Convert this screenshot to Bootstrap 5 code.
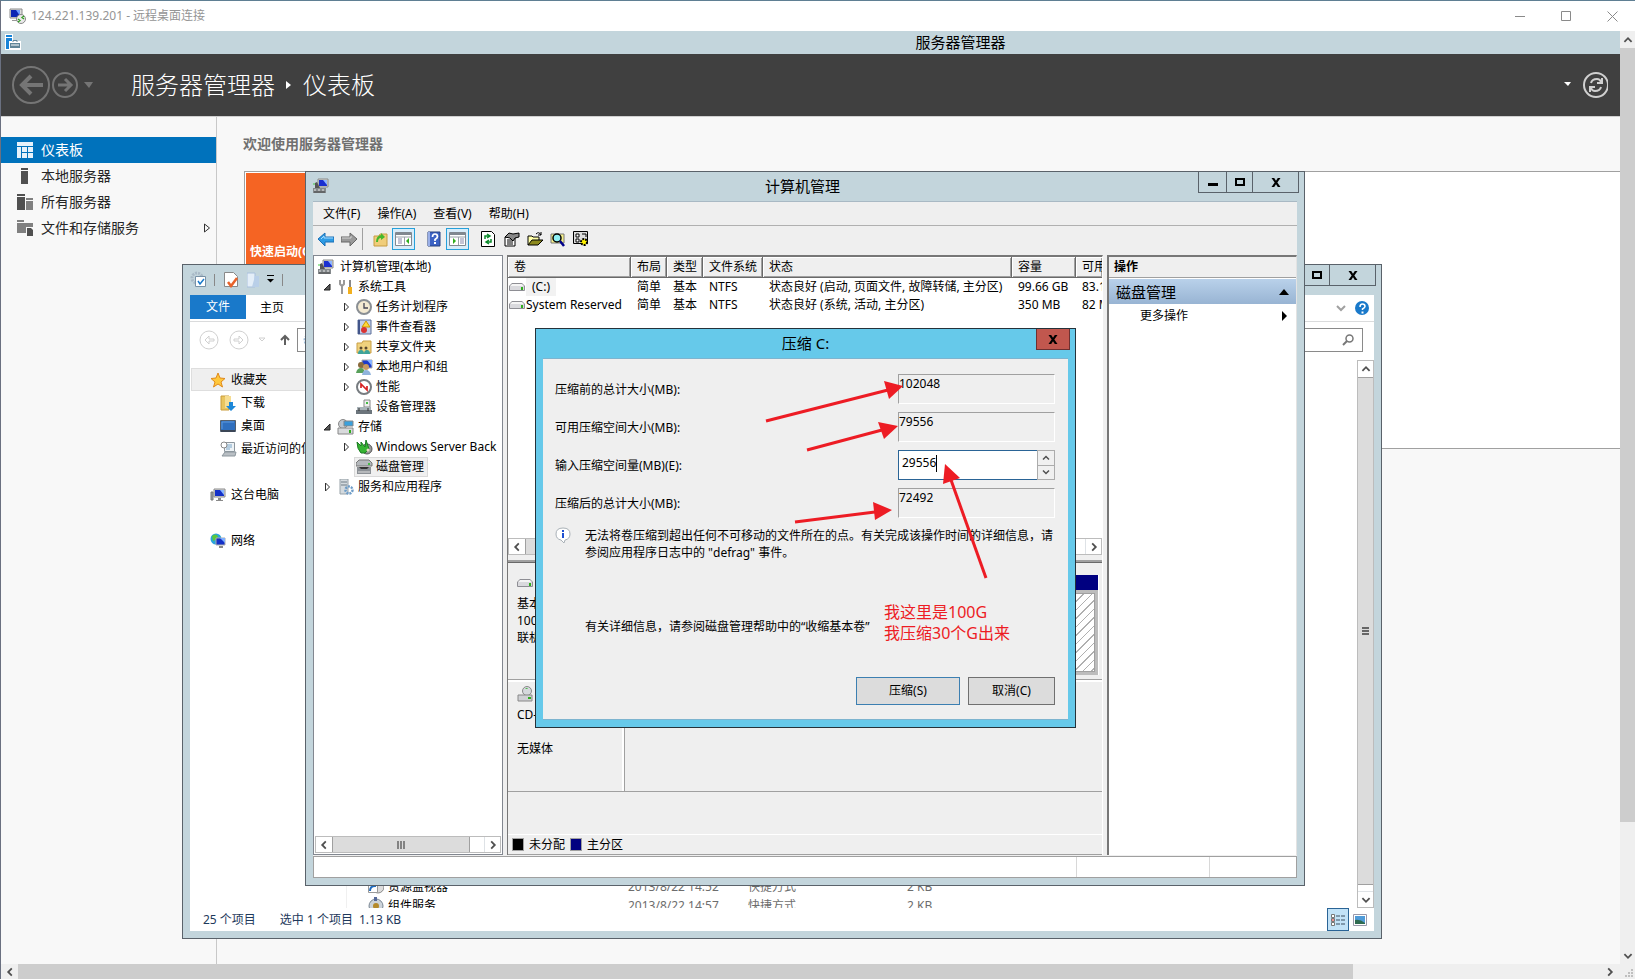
<!DOCTYPE html>
<html lang="zh-CN">
<head>
<meta charset="utf-8">
<meta name="viewport" content="width=device-width, initial-scale=1">
<title>124.221.139.201 - 远程桌面连接</title>
<link href="https://cdn.jsdelivr.net/npm/bootstrap@5.3.0/dist/css/bootstrap.min.css" rel="stylesheet">
<script src="https://cdn.jsdelivr.net/npm/bootstrap@5.3.0/dist/js/bootstrap.bundle.min.js"></script>
<style>
  :root { --frame:#c3d5dc; --face:#efefef; --edge:#5a626a; }
  body { font-family:"Noto Sans","Noto Sans CJK SC",sans-serif; font-size:12px; line-height:18px; color:#000; background:#fff; overflow:hidden; }
  .desk { height:100vh; border-top:1px solid #5f7f93; border-left:1px solid #6a7080; }
  button { font:inherit; color:inherit; background:none; border:0; padding:0; }
  a { color:inherit; text-decoration:none; }
  svg { flex:none; display:block; }
  .clip { overflow:hidden; white-space:nowrap; }

  .rdp-bar { height:30px; color:#959595; padding-left:8px; }
  .rdp-bar button { width:46px; height:30px; }
  .sm-title { height:23px; background:var(--frame); font-size:15px; padding-bottom:2px; }
  .sm-title .caption-text { margin-left:280px; }
  .sm-head { height:62px; background:#404040; color:#fff; font-size:24px; font-weight:300; }
  .sm-head .history { margin-right:38px; }
  .sm-side { width:216px; background:#f8f8f8; border-right:1px solid #c8c8c8; padding-top:20px; }
  .sm-side a { height:26px; font-size:14px; padding:0 5px 0 15px; color:#262626; gap:7px; }
  .sm-side a.current { background:#0072bc; color:#fff; }
  .sm-main { background:#f8f8f8; border-top:1px solid #d0d0d0; }
  .sm-main h1 { font-size:14px; line-height:20px; font-weight:700; color:#707070; margin:0; padding:17px 0 0 26px; }
  .welcome { margin:17px 0 0 27px; height:278px; border:1px solid #a0a0a0; border-right:0; background:#fff; padding:1px; }
  .tile { width:240px; height:91px; background:#f56423; color:#fff; padding:0 4px 3px; font-size:12px; font-weight:700; }

  .vbar { width:15px; background:var(--face); }
  .vbar .thumb { background:#cdcdcd; }
  .hbar { height:15px; background:var(--face); }
  .hbar .thumb { background:#cdcdcd; }
  .end { width:17px; height:17px; }
  .vbar .end { width:15px; }
  .hbar .end { height:15px; }

  .win { position:absolute; border:1px solid var(--edge); background:var(--frame); padding:0 7px 7px; }
  .win-btns button { border:1px solid var(--edge); border-top:0; height:21px; margin-left:-1px; }
  .win-btns { margin-right:-2px; }

  .explorer { left:182px; top:264px; width:1200px; height:675px; }
  .explorer .bar { height:30px; padding-bottom:1px; }
  .qat { gap:7px; }
  .explorer .client { background:#fff; }
  .ribbon { height:27px; border-bottom:1px solid #dadbdc; }
  .ribbon .file { width:56px; height:24px; background:#1979ca; color:#fff; }
  .ribbon .home { width:52px; height:26px; }
  .nav-row { height:38px; padding-bottom:2px; }
  .addr { height:24px; border:1px solid #8a8a8a; }
  .search-box { width:240px; margin:0 11px 0 8px; }
  .places { width:157px; border-right:1px solid #f0f0f0; padding-top:8px; }
  .places a { height:23px; padding-left:30px; gap:4px; }
  .places a.top-level { padding-left:20px; gap:5px; }
  .places a.picked { background:var(--face); border:1px solid #dedede; margin-left:1px; padding-left:18px; }
  .files { width:620px; margin-bottom:-7px; }
  .files td { height:19px; padding:0; color:#6d6d6d; }
  .files td:first-child { color:#000; }
  .ex-scroll { width:17px; border:1px solid #bcbcbc; }
  .ex-scroll .thumb { background:#dcdcdc; border-top:1px solid #a0a0a0; border-bottom:1px solid #a0a0a0; height:508px; }
  .ex-scroll .step { height:16px; }
  .ex-status { height:23px; color:#1e395b; padding:0 7px 0 13px; gap:20px; }
  .view-on { width:22px; height:23px; background:#c2e2f7; border:1px solid #2a6496; }

  .mmc { left:305px; top:171px; width:1000px; height:715px; }
  .mmc .bar { height:30px; border-bottom:1px solid #a9b9c4; font-size:15px; }
  .mmc .caption-text { padding:0 0 1px 76px; }
  .mmc .client { background:var(--face); }
  .menu { height:24px; border-bottom:1px solid #b0b0b0; padding-left:10px; gap:17px; }
  .tools { height:29px; padding:0 0 4px 5px; }
  .tools button { height:22px; width:23px; }
  .tools .on { border:1px solid #26a0da; background:#d8ecf9; }
  .tools .rule { width:1px; height:22px; background:#a0a0a0; margin:0 6px 0 -2px; }
  .panes { gap:4px; }
  .tree { width:190px; background:#fff; border:1px solid #828790; padding:1px 1px 1px; }
  .tree ul { list-style:none; margin:0; padding:0; }
  .tree li { height:20px; gap:3px; }
  .tree .lv0 { padding-left:3px; gap:6px; }
  .tree .lv1 { padding-left:7px; }
  .tree .lv2 { padding-left:26px; }
  .tree svg.tw { margin-right:2px; }
  .tree .here { background:#f0f0f0; border:1px solid #dadada; margin-left:-2px; padding:0 3px 0 1px; height:20px; gap:3px; }
  .cbar { height:17px; background:#fff; border:1px solid #bcbcbc; }
  .cbar .thumb { background:#dcdcdc; border-left:1px solid #a0a0a0; border-right:1px solid #a0a0a0; }
  .cbar .step { width:16px; }
  .mid { width:596px; border-left:1px solid #777; border-top:2px solid #777; border-right:1px solid #fff; }
  .vols { height:298px; background:#fff; }
  .vols table { table-layout:fixed; width:100%; border-collapse:separate; border-spacing:0; }
  .vols th { height:21px; padding:0 6px; font-weight:400; background:var(--face); border-right:1px solid #696969; border-bottom:1px solid #696969; box-shadow:inset 1px 1px #fff, inset -1px -1px #a0a0a0; }
  .vols td { height:18px; padding:0 0 0 6px; }
  .vols th:last-child { border-right:0; padding-right:0; }
  .vols td:first-child { padding-left:1px; }
  .volname { background:#f2f2f2; padding:0 6px; margin-left:1px; }
  .splitter { height:8px; border-bottom:1px solid #696969; box-shadow:inset 0 -2px #a0a0a0; }
  .disk { border-bottom:1px solid #a0a0a0; }
  .disk-a { height:117px; }
  .disk-b { height:112px; border-top:2px solid #fff; }
  .disk .tag { width:117px; padding:8px 0 0 9px; line-height:17px; }
  .disk-b .tag { border-right:1px solid #a0a0a0; box-shadow:inset -2px 0 #fff; padding-top:4px; }
  .part { margin:12px 3px 4px 0; background:#bcbcbc; padding-bottom:3px; border-right:1px solid #fff; }
  .part .cap { height:15px; background:#000080; margin-bottom:3px; }
  .part .fillarea { margin-right:3px; border:1px solid #a0a0a0; background:#fff repeating-linear-gradient(135deg,#fff 0 5px,#b0b0b0 5px 6px); }
  .legend { height:21px; border-top:1px solid #fff; border-bottom:1px solid #a0a0a0; padding-left:4px; gap:5px; }
  .key { width:12px; height:13px; border:1px solid #a0a0a0; }
  .acts { background:#fff; border-left:2px solid #777; border-top:2px solid #777; border-right:1px solid #e3e3e3; }
  .acts .cap { height:21px; line-height:20px; background:var(--face); border-bottom:1px solid #a0a0a0; padding-left:5px; font-weight:600; }
  .acts .sect { height:25px; margin-top:1px; background:linear-gradient(#b9d1ea,#98b4d3); font-size:15px; padding:0 7px; }
  .acts .more { height:23px; padding:0 7px 0 31px; }
  .mmc-status { height:22px; margin-top:1px; background:#fff; border:1px solid #a0a0a0; }
  .mmc-status div { border-left:1px solid #d8d8d8; }

  .dlg { left:535px; top:328px; width:541px; height:400px; background:#66c9ea; border-color:#25323a; }
  .dlg .bar { height:29px; font-size:15px; padding-bottom:2px; }
  .dlg .client { background:var(--face); border:1px solid #7db4cf; border-left:0; border-right:0; padding:15px 13px 14px 12px; }
  .dlg .close { position:absolute; right:5px; top:0; width:34px; height:21px; background:#c1574e; border:1px solid #6d3030; border-top:0; }
  .frow { height:38px; }
  .frow label { width:343px; line-height:32px; }
  .frow input { width:157px; height:30px; border:1px solid #fff; border-top-color:#a0a0a0; border-left-color:#a0a0a0; background:transparent; font:inherit; padding:0 0 12px; outline:0; }
  .spin { width:157px; height:30px; background:#fff; border:1px solid #2a6496; }
  .spin input { border:0; width:37px; height:22px; padding:0 0 0 3px; }
  .caret-bar { width:1px; height:17px; background:#000; }
  .spin .steps { width:18px; margin:-1px; background:#acacac; padding:1px; gap:1px; }
  .spin .steps button { background:#f0f0f0; }
  .hint { line-height:17px; gap:14px; padding-top:1px; }
  .hint-more { line-height:17px; padding:57px 0 0 30px; }
  .push { height:28px; background:#dcdcdc; border:1px solid #707070; }
  .push.def { border-color:#3c7fb1; }
  .note { position:absolute; left:884px; top:602px; font-size:16px; line-height:21px; color:#ed1c24; }
  .arrows { position:absolute; left:760px; top:380px; }
</style>
</head>
<body>
<svg width="0" height="0" class="position-absolute" aria-hidden="true">
  <defs>
    <symbol id="pc" viewBox="0 0 16 16"><path d="M5 1h10v8H5z" fill="#d8d8d0" stroke="#8a8a8a"/><path d="M6 2h8v6H6z" fill="#1a2fd0"/><path d="M10 2h4v5z" fill="#8fb6ff"/><path d="M2 5l2-1 3 6H2z" fill="#555"/><path d="M0 10h13v5H0z" fill="#84898c"/><path d="M1 12h2m2 0h2m2 0h2" stroke="#e8e8e8"/><path d="M1 14h11" stroke="#444"/><path d="M1 5v2" stroke="#4c4"/></symbol>
    <symbol id="monitor" viewBox="0 0 16 16"><path d="M4 2h11v8H4z" fill="#ddd" stroke="#8a8a8a"/><path d="M5 3h9v6H5z" fill="#1430c8"/><path d="M10 3h4v5z" fill="#8cb8ff"/><path d="M1 5h2v8H1z" fill="#9aa3a8" stroke="#777"/><path d="M8 11h3v2h2v1H6v-1h2z" fill="#8a8a8a"/></symbol>
    <symbol id="drive" viewBox="0 0 16 16"><path d="M3 4h10l3 3v4q0 1-1 1H1q-1 0-1-1V7z" fill="#8e8e94"/><path d="M3 5h10l2 2H1z" fill="#f4f4f4"/><path d="M1 7h14v4H1z" fill="#d9d9dd"/><path d="M12 8h2v3h-2z" fill="#2fae1d"/></symbol>
    <symbol id="tw-c" viewBox="0 0 10 10"><path d="M3.500 1v8l4-4z" fill="#fff" stroke="#333"/></symbol>
    <symbol id="tw-o" viewBox="0 0 10 10"><path d="M8 2v6H2z" fill="#595959" stroke="#222"/></symbol>
    <symbol id="up" viewBox="0 0 10 10"><path d="M2 6.500l3-3 3 3" fill="none" stroke="#505050" stroke-width="1.500"/></symbol>
    <symbol id="down" viewBox="0 0 10 10"><path d="M2 3.500l3 3 3-3" fill="none" stroke="#505050" stroke-width="1.500"/></symbol>
    <symbol id="lt" viewBox="0 0 10 10"><path d="M6.500 2l-3 3 3 3" fill="none" stroke="#505050" stroke-width="1.500"/></symbol>
    <symbol id="rt" viewBox="0 0 10 10"><path d="M3.500 2l3 3-3 3" fill="none" stroke="#505050" stroke-width="1.500"/></symbol>
    <symbol id="xb" viewBox="0 0 10 10"><path d="M0 0h3l2 3 2-3h3L6.500 5 10 10H7L5 7l-2 3H0l3.500-5z" fill="#000"/></symbol>
    <symbol id="server" viewBox="0 0 16 16"><path d="M5 0h7v2H5zM5 3h7v13H5z" fill="currentColor"/></symbol>
  </defs>
</svg>

<div class="desk d-flex flex-column">
  <header class="rdp-bar d-flex align-items-center">
    <svg width="18" height="18" viewBox="0 0 18 18"><path d="M1 2h12v9H1z" fill="#ddd" stroke="#8c8c8c"/><path d="M2 3h9v7H2z" fill="#0b24b4"/><path d="M7 3h4v6z" fill="#6f9cff"/><path d="M3 13h6v1H3z" fill="#999"/><circle cx="12" cy="12" r="4.500" fill="#e9e9e9" stroke="#888"/><path d="M9 12l2 1.500L9 15M15 9l-2 1.500 2 1.500" fill="none" stroke="#2c9c1c" stroke-width="1.300"/></svg>
    <span class="ms-1 flex-fill">124.221.139.201 - 远程桌面连接</span>
    <button aria-label="最小化"><svg class="m-auto" width="11" height="11"><path d="M0 5.500h10" stroke="#8a8a8a"/></svg></button>
    <button aria-label="最大化"><svg class="m-auto" width="11" height="11"><path d="M.5.5h9v9h-9z" fill="none" stroke="#8a8a8a"/></svg></button>
    <button aria-label="关闭"><svg class="m-auto" width="11" height="11"><path d="M.5.5l10 10m0-10l-10 10" stroke="#8a8a8a"/></svg></button>
  </header>

  <div class="d-flex flex-fill overflow-hidden">
    <div class="d-flex flex-column flex-fill overflow-hidden">
      <div class="sm-title d-flex align-items-center">
        <svg class="ms-1" width="16" height="16" viewBox="0 0 16 16"><path d="M0 0h8v16H0z" fill="#fff"/><path d="M1 1h6v2H1zM1 4h6v11H1z" fill="#1883d7"/><path d="M4 7h12v9H4z" fill="#fff"/><path d="M5 9h10v5H5z" fill="#5f8598"/><path d="M8 8V6.500h4V8M5 11.500h10" fill="none" stroke="#5f8598"/><path d="M6 11h8" stroke="#fff"/></svg>
        <span class="caption-text flex-fill text-center">服务器管理器</span>
      </div>
      <div class="sm-head d-flex align-items-center">
        <svg width="84" height="40" viewBox="0 0 84 40" class="ms-2 history" fill="none" stroke="#757575"><circle cx="22" cy="20" r="18" stroke-width="2"/><path d="M34 20H14m8-9l-9 9 9 9" stroke-width="4"/><circle cx="56" cy="20" r="12" stroke-width="2"/><path d="M49 20h13m-6-6l6 6-6 6" stroke-width="3"/><path d="M75 17h9l-4 6z" fill="#757575" stroke="none"/></svg>
        <span>服务器管理器</span>
        <svg class="mx-2" width="12" height="10"><path d="M3 1v8l5-4z" fill="#fff"/></svg>
        <span class="flex-fill">仪表板</span>
        <svg width="9" height="6" class="me-2"><path d="M1 0h7l-3 4z" fill="#fff"/></svg>
        <button aria-label="刷新" class="me-2 pe-1"><svg width="28" height="28" viewBox="0 0 28 28" fill="none" stroke="#d0d0d0"><circle cx="16" cy="14" r="12" stroke-width="2"/><path d="M11 12q1-4 6-4 3 0 4 3M21 16q-1 4-6 4-3 0-4-3" stroke-width="2"/><path d="M22 7v5h-5M10 21v-5h5" stroke-width="2"/></svg></button>
      </div>
      <div class="d-flex flex-fill overflow-hidden sm-main">
        <nav class="sm-side flex-shrink-0">
          <a href="#" class="current d-flex align-items-center"><svg width="18" height="16"><path d="M1 0h16v4H1zM1 5h4v11H1zM6 5h5v5H6zM12 5h5v5h-5zM6 11h5v5H6zM12 11h5v5h-5z" fill="#e6f2fb"/></svg><span>仪表板</span></a>
          <a href="#" class="d-flex align-items-center"><svg width="18" height="16" color="#505050"><use href="#server" width="16" height="16"/></svg><span>本地服务器</span></a>
          <a href="#" class="d-flex align-items-center"><svg width="18" height="16"><path d="M1 0h8v2H1zM1 3h8v13H1z" fill="#505050"/><path d="M10 4h7v2h-7zM10 7h7v9h-7z" fill="#808080"/></svg><span>所有服务器</span></a>
          <a href="#" class="d-flex align-items-center"><svg width="18" height="16"><path d="M1 0h7v2H1zM1 3h16v4h-7v6H1z" fill="#808080"/><path d="M11 8h4l2 2v6h-6z" fill="#505050"/></svg><span class="flex-fill">文件和存储服务</span><svg width="8" height="10"><path d="M1.500 1v8l5-4z" fill="none" stroke="#333"/></svg></a>
        </nav>
        <main class="flex-fill">
          <h1>欢迎使用服务器管理器</h1>
          <div class="welcome"><div class="tile d-flex align-items-end">快速启动(Q)</div></div>
        </main>
      </div>
    </div>
    <div class="vbar d-flex flex-column">
      <div class="end d-flex"><svg class="m-auto" width="12" height="12"><use href="#up"/></svg></div>
      <div class="thumb" style="height:83%"></div>
      <div class="flex-fill"></div>
      <div class="end d-flex"><svg class="m-auto" width="12" height="12"><use href="#down"/></svg></div>
    </div>
  </div>
  <div class="hbar d-flex flex-shrink-0">
    <div class="end d-flex"><svg class="m-auto" width="12" height="12"><use href="#lt"/></svg></div>
    <div class="thumb" style="width:81.7%"></div>
    <div class="flex-fill"></div>
    <div class="end d-flex"><svg class="m-auto" width="12" height="12"><use href="#rt"/></svg></div>
    <div class="end d-flex"><svg class="mt-auto ms-auto" width="10" height="10"><path d="M6 0h2v2H6zM3 3h2v2H3zM6 3h2v2H6zM0 6h2v2H0zM3 6h2v2H3zM6 6h2v2H6z" fill="#bfbfbf"/></svg></div>
  </div>
</div>

<!-- 文件资源管理器 -->
<section class="win explorer d-flex flex-column">
  <div class="bar d-flex flex-shrink-0 justify-content-between">
    <div class="d-flex align-items-center qat">
      <svg width="17" height="17" viewBox="0 0 17 17"><circle cx="7" cy="7" r="5" fill="none" stroke="#a9b9c6" stroke-width="3" stroke-dasharray="2 1"/><path d="M5.500 5.500h10v10h-10z" fill="#fff" stroke="#7891a6"/><path d="M8 10l2 3 4-5" fill="none" stroke="#1979ca" stroke-width="1.500"/></svg>
      <svg width="2" height="12"><path d="M.5 0v12" stroke="#888"/></svg>
      <svg width="17" height="17" viewBox="0 0 17 17"><path d="M1.500 1.500h9l4 4v10h-13z" fill="#fff" stroke="#888"/><path d="M5 11l3 4 6-8" fill="none" stroke="#e8622a" stroke-width="2.500"/></svg>
      <svg width="13" height="16" viewBox="0 0 13 16"><path d="M0 1h8v14H0z" fill="#e4eef8" stroke="#a9c0dc"/><path d="M8 4h4v11H5z" fill="#b9cfe8"/></svg>
      <svg width="8" height="9"><path d="M0 .5h7" stroke="#000"/><path d="M0 4h7L3.500 7.500z"/></svg>
      <svg width="2" height="12"><path d="M.5 0v12" stroke="#888"/></svg>
    </div>
    <div class="win-btns d-flex">
      <button style="width:28px" aria-label="最小化"></button>
      <button style="width:27px" aria-label="最大化"><svg class="m-auto" width="10" height="8"><path d="M1 1h8v6H1z" fill="none" stroke="#000" stroke-width="2"/></svg></button>
      <button style="width:47px" aria-label="关闭"><svg class="m-auto" width="10" height="9"><use href="#xb"/></svg></button>
    </div>
  </div>
  <div class="client flex-fill d-flex flex-column overflow-hidden">
    <div class="ribbon d-flex flex-shrink-0">
      <button class="file">文件</button><button class="home">主页</button>
      <div class="ms-auto d-flex align-items-center gap-2 pe-1">
        <svg width="12" height="12"><path d="M2 4l4 4 4-4" fill="none" stroke="#a0a0a0" stroke-width="2"/></svg>
        <svg width="15" height="15"><circle cx="7" cy="7" r="7" fill="#1979ca"/><path d="M5 6q0-3 2.500-3T10 5.500q0 1-2.500 2.500v1" fill="none" stroke="#fff" stroke-width="1.500"/><path d="M6.500 10.500h2v2h-2z" fill="#fff"/></svg>
      </div>
    </div>
    <div class="nav-row d-flex align-items-center flex-shrink-0">
      <svg width="107" height="24" viewBox="0 0 107 24" fill="none" stroke="#d0d0d0"><circle cx="19" cy="12" r="9"/><path d="M24 11h-5V8l-4 4 4 4v-3h5z"/><circle cx="49" cy="12" r="9"/><path d="M44 11h5V8l4 4-4 4v-3h-5z"/><path d="M69 10h6l-3 3z"/><path d="M95 17V8m-4 4l4-4 4 4" stroke="#606060" stroke-width="2"/></svg>
      <div class="addr flex-fill d-flex align-items-center"><svg class="ms-1" width="16" height="16"><circle cx="8" cy="8" r="5" fill="none" stroke="#9fc0dd" stroke-width="3" stroke-dasharray="2 1"/></svg></div>
      <div class="addr search-box d-flex align-items-center justify-content-end pe-2"><svg width="12" height="12"><circle cx="7.500" cy="4.500" r="3.500" fill="none" stroke="#777" stroke-width="1.500"/><path d="M5 7l-4 4" stroke="#777" stroke-width="2"/></svg></div>
    </div>
    <div class="d-flex flex-fill overflow-hidden">
      <nav class="places flex-shrink-0 clip">
        <a href="#" class="top-level picked d-flex align-items-center"><svg width="16" height="16"><path d="M8 1l2 5 5 .5-4 3.500 1.500 5L8 12l-4.500 3L5 10 1 6.500 6 6z" fill="#ffc83c" stroke="#e08a1c"/></svg><span>收藏夹</span></a>
        <a href="#" class="d-flex align-items-center"><svg width="17" height="16"><path d="M1 1h8v14H1z" fill="#e9c55f" stroke="#c99c3a"/><path d="M5 1h6v12H5z" fill="#f6dd92"/><path d="M9 7h4v4h3l-5 5-5-5h3z" fill="#1e88d8"/></svg><span>下载</span></a>
        <a href="#" class="d-flex align-items-center"><svg width="17" height="16"><path d="M.5 2.500h15v11H.5z" fill="#2f6fbe" stroke="#55606c"/><path d="M1 12h14v2H1z" fill="#3b4656"/><path d="M2 11V4h12" fill="none" stroke="#5f9ade"/></svg><span>桌面</span></a>
        <a href="#" class="d-flex align-items-center"><svg width="17" height="16"><path d="M4.500 1.500h10v9h-10z" fill="#eef3f6" stroke="#8d979e"/><path d="M6 4h6M6 6h6M6 8h4" stroke="#7aa6c9"/><circle cx="4" cy="4" r="3" fill="#fff" stroke="#888"/><path d="M2 15l3-4h11l-1 4z" fill="#b9bfc4" stroke="#8d979e"/></svg><span>最近访问的位置</span></a>
        <div style="height:23px"></div>
        <a href="#" class="top-level d-flex align-items-center"><svg width="16" height="16"><use href="#monitor"/></svg><span>这台电脑</span></a>
        <div style="height:23px"></div>
        <a href="#" class="top-level d-flex align-items-center"><svg width="16" height="16"><circle cx="6" cy="6" r="5.500" fill="#2aa4dc"/><path d="M2 3q3-3 6 0-1 4-5 5z" fill="#5ac83c"/><path d="M6 5h9v7H6z" fill="#1430c8" stroke="#aaa"/><path d="M10 5h5v5z" fill="#7fb0ff"/><path d="M9 14h4" stroke="#888" stroke-width="2"/></svg><span>网络</span></a>
      </nav>
      <div class="flex-fill d-flex align-items-end overflow-hidden">
        <table class="files">
          <tbody>
            <tr><td style="width:281px"><span class="d-flex gap-1 ms-3 ps-1"><svg width="17" height="17"><circle cx="11" cy="9" r="6" fill="#ddd" stroke="#888"/><path d="M1.500 4.500h9v10h-9z" fill="#fff" stroke="#999"/><path d="M3 13q0-5 5-5V6" fill="none" stroke="#1e6cc0" stroke-width="2"/></svg>资源监视器</span></td><td style="width:120px">2013/8/22 14:52</td><td style="width:159px">快捷方式</td><td>2 KB</td></tr>
            <tr><td><span class="d-flex gap-1 ms-3 ps-1"><svg width="17" height="17"><circle cx="9" cy="9" r="7" fill="#ccd3da" stroke="#7a8794"/><circle cx="9" cy="9" r="3" fill="#b58a2c"/><path d="M7 0h3v4H7z" fill="#56699a"/></svg>组件服务</span></td><td>2013/8/22 14:57</td><td>快捷方式</td><td>2 KB</td></tr>
          </tbody>
        </table>
      </div>
      <div class="ex-scroll d-flex flex-column flex-shrink-0">
        <div class="step d-flex"><svg class="m-auto" width="12" height="12"><use href="#up"/></svg></div>
        <div class="thumb d-flex"><svg class="m-auto" width="7" height="9"><path d="M0 1h7M0 4h7M0 7h7" stroke="#666" stroke-width="2"/></svg></div>
        <div class="step d-flex mt-auto border-top"><svg class="m-auto" width="12" height="12"><use href="#down"/></svg></div>
      </div>
    </div>
    <div class="ex-status d-flex align-items-center flex-shrink-0">
      <span>25 个项目</span><span class="ps-1">选中 1 个项目</span><span style="margin-left:-14px">1.13 KB</span>
      <div class="ms-auto d-flex align-items-center gap-1">
        <button class="view-on" aria-label="详细信息"><svg class="m-auto" width="16" height="14"><path d="M1.500 1.500h3v3h-3zM1.500 5.500h3v3h-3zM1.500 9.500h3v3h-3z" fill="#fff" stroke="#777"/><path d="M2.500 7h1" stroke="#d22" stroke-width="2"/><path d="M6 3h4m1 0h4M6 7h4m1 0h4M6 11h4m1 0h4" stroke="#3d4f60"/></svg></button>
        <button aria-label="大图标"><svg width="14" height="12"><path d="M.5.5h13v11H.5z" fill="#fff" stroke="#99a"/><path d="M2 2h10v8H2z" fill="#4f9bd8"/><path d="M2 6q5-1 10 3v1H2z" fill="#2f6b50"/></svg></button>
      </div>
    </div>
  </div>
</section>

<!-- 计算机管理 -->
<section class="win mmc d-flex flex-column">
  <div class="bar d-flex flex-shrink-0">
    <svg class="mt-1" width="17" height="19" viewBox="0 0 17 19"><use href="#pc" y="2" width="16" height="16"/></svg>
    <span class="flex-fill text-center align-self-center caption-text">计算机管理</span>
    <div class="win-btns d-flex">
      <button style="width:29px" aria-label="最小化"><svg class="m-auto" width="10" height="9"><path d="M0 6.500h10" stroke="#000" stroke-width="3"/></svg></button>
      <button style="width:27px" aria-label="最大化"><svg class="m-auto" width="10" height="8"><path d="M1 1h8v6H1z" fill="none" stroke="#000" stroke-width="2"/></svg></button>
      <button style="width:47px" aria-label="关闭"><svg class="m-auto" width="10" height="9"><use href="#xb"/></svg></button>
    </div>
  </div>
  <div class="client flex-fill d-flex flex-column overflow-hidden">
    <div class="menu d-flex align-items-center flex-shrink-0">
      <button>文件(F)</button><button>操作(A)</button><button>查看(V)</button><button>帮助(H)</button>
    </div>
    <div class="tools d-flex align-items-center flex-shrink-0">
      <button aria-label="后退"><svg width="16" height="16"><path d="M0 8l7-6v4h9v5H7v4z" fill="#2e9be4" stroke="#1b6fb5"/><path d="M3 8l3-3v2h9" fill="none" stroke="#a5dcff"/></svg></button>
      <button aria-label="前进"><svg width="16" height="16"><path d="M16 8L9 2v4H0v5h9v4z" fill="#9a9a9a" stroke="#666"/><path d="M1 7h9V5" fill="none" stroke="#d4d4d4"/></svg></button>
      <div class="rule"></div>
      <button class="ms-1" aria-label="上一级"><svg width="16" height="16"><path d="M1 5h5l1-2h7v12H1z" fill="#f0cd7a" stroke="#c79c42"/><path d="M3 11q0-6 5-7V2l4 4-4 3V7q-3 0-3 4z" fill="#44b82c"/></svg></button>
      <button class="on" style="margin-left:-4px" aria-label="显示/隐藏控制台树"><svg class="m-auto" width="17" height="14"><path d="M.5.500h16v13H.5z" fill="#fff" stroke="#808890"/><path d="M1 2h15" stroke="#808890" stroke-width="2"/><path d="M1 5h15M9.500 5v8" stroke="#9aa2aa"/><path d="M3 7h4M3 9h4M3 11h4" stroke="#88a"/><path d="M14 6v6l-3-3z" fill="#2fae1d"/></svg></button>
      <button class="ms-2" aria-label="帮助"><svg class="ms-1" width="14" height="16"><path d="M1 1h12v14H1z" fill="#3c62c4" stroke="#27407e"/><path d="M1 1h2v14H1z" fill="#9ab0e8"/><path d="M5.500 6q0-3 2.500-3t2.500 2.500Q10.500 7 8 8.500V10" fill="none" stroke="#fff" stroke-width="1.700"/><path d="M7 11h2v2H7z" fill="#fff"/></svg></button>
      <button class="on" aria-label="显示/隐藏操作窗格"><svg class="m-auto" width="17" height="14"><path d="M.5.500h16v13H.5z" fill="#fff" stroke="#808890"/><path d="M1 2h15" stroke="#808890" stroke-width="2"/><path d="M1 5h15M9.500 5v8" stroke="#9aa2aa"/><path d="M11 7h4M11 9h4M11 11h4" stroke="#88a"/><path d="M4 6v6l3-3z" fill="#2fae1d"/></svg></button>
      <button class="ms-2" aria-label="刷新"><svg class="ms-1" width="14" height="16"><path d="M.5.500h10l3 3v12H.5z" fill="#fff" stroke="#000"/><path d="M4 8V5h4M6 3l3 2-3 2M10 8v3H6m2-2l-3 2 3 2" fill="none" stroke="#0a8a2a" stroke-width="1.500"/></svg></button>
      <button aria-label="属性"><svg class="ms-1" width="16" height="16"><path d="M1 6h10v9H1z" fill="#fff" stroke="#000"/><path d="M3 9h6M3 11h6M3 13h6" stroke="#000"/><path d="M1 6l4-4 4 1 6-1v4l-4 1-2 3-3-3z" fill="#888" stroke="#000"/></svg></button>
      <button aria-label="打开"><svg class="ms-1" width="17" height="16"><path d="M1 14V5h4l1 1h6v3" fill="#ffffa8" stroke="#000"/><path d="M1 14l4-5h11l-5 5z" fill="#8d8a1e" stroke="#000"/><path d="M9 3q3-3 5 1m0-3v3h-3" fill="none" stroke="#000"/></svg></button>
      <button aria-label="查找"><svg class="ms-1" width="16" height="16"><path d="M1 3h13v9H1z" fill="#f5f08a" stroke="#777"/><circle cx="7" cy="7" r="4" fill="#8ff0f5" stroke="#000" stroke-width="1.500"/><path d="M10 10l4 5" stroke="#00008a" stroke-width="2.500"/></svg></button>
      <button aria-label="设置"><svg class="ms-1" width="17" height="16"><path d="M.5.500h14v12H.5z" fill="#ddd" stroke="#000"/><path d="M3 3h3v3H3zM3 8h3v3H3z" fill="#fff" stroke="#000"/><path d="M9 3h4v3" fill="none" stroke="#000"/><circle cx="11" cy="11" r="3" fill="#fff200" stroke="#000" stroke-dasharray="2 1" stroke-width="2"/></svg></button>
    </div>
    <div class="panes d-flex flex-fill overflow-hidden">
      <div class="tree d-flex flex-column flex-shrink-0">
        <ul class="flex-fill clip">
          <li class="lv0 d-flex align-items-center"><svg width="16" height="16"><use href="#pc"/></svg>计算机管理(本地)</li>
          <li class="lv1 d-flex align-items-center"><svg class="tw" width="10" height="10"><use href="#tw-o"/></svg><svg width="18" height="16"><path d="M3 1v4l2 2 2-2V1M5 7v8" fill="none" stroke="#999" stroke-width="2"/><path d="M13 1v7" stroke="#888" stroke-width="2"/><path d="M11 8h4v7h-4z" fill="#f2b01e"/></svg>系统工具</li>
          <li class="lv2 d-flex align-items-center"><svg class="tw" width="10" height="10"><use href="#tw-c"/></svg><svg width="17" height="16"><circle cx="8" cy="8" r="7" fill="#f4ead2" stroke="#8a8f94" stroke-width="2"/><path d="M8 4v5h4" fill="none" stroke="#445" stroke-width="1.300"/></svg>任务计划程序</li>
          <li class="lv2 d-flex align-items-center"><svg class="tw" width="10" height="10"><use href="#tw-c"/></svg><svg width="17" height="16"><path d="M2 1h13v14H2z" fill="#c3d0ea" stroke="#5d6f98"/><path d="M3 1v14" stroke="#42558a" stroke-width="2"/><path d="M10 2l4 6H6z" fill="#ffd83a" stroke="#c90"/><circle cx="8" cy="11" r="3" fill="#d93434"/></svg>事件查看器</li>
          <li class="lv2 d-flex align-items-center"><svg class="tw" width="10" height="10"><use href="#tw-c"/></svg><svg width="17" height="16"><path d="M1 4h5l1-2h8v12H1z" fill="#f0d27e" stroke="#c99f45"/><circle cx="5" cy="9" r="1.500" fill="#5a4a30"/><circle cx="10" cy="9" r="1.500" fill="#5a4a30"/><path d="M2 15q0-4 3-4t3 4zM8 15q0-4 3-4t3 4z" fill="#3da39a"/></svg>共享文件夹</li>
          <li class="lv2 d-flex align-items-center"><svg class="tw" width="10" height="10"><use href="#tw-c"/></svg><svg width="17" height="16"><path d="M6 1h10v8H6z" fill="#1c3ccc" stroke="#aaa"/><path d="M11 1h5v6z" fill="#8ab4ff"/><circle cx="5" cy="6" r="3" fill="#8a6a3c"/><circle cx="10" cy="8" r="3" fill="#c99a62"/><path d="M0 14q1-5 5-5 3 0 4 5z" fill="#58a05a"/><path d="M6 16q1-5 4-5 4 0 5 5z" fill="#8fb3dc"/></svg>本地用户和组</li>
          <li class="lv2 d-flex align-items-center"><svg class="tw" width="10" height="10"><use href="#tw-c"/></svg><svg width="17" height="16"><circle cx="8" cy="8" r="7" fill="#fff" stroke="#777c80" stroke-width="2"/><path d="M5 9V5l6 6V7" fill="none" stroke="#d62020" stroke-width="1.700"/></svg>性能</li>
          <li class="lv2 d-flex align-items-center"><svg class="tw" width="10" height="10"></svg><svg width="17" height="16"><path d="M8 1h6v7H8z" fill="#eee" stroke="#888"/><path d="M10 3h2v2h-2z" fill="#4b4"/><path d="M1 8h14v3H1z" fill="#a8b2b8"/><path d="M0 11h16v4H0z" fill="#6c757c"/><path d="M3 9v3M12 9v3" stroke="#333"/></svg>设备管理器</li>
          <li class="lv1 d-flex align-items-center"><svg class="tw" width="10" height="10"><use href="#tw-o"/></svg><svg width="18" height="16"><circle cx="6" cy="5" r="4.500" fill="#c8ccd0" stroke="#888"/><path d="M7 2h9v5H7z" fill="#3aa0dc" stroke="#888"/><path d="M1 9h15v6H1z" fill="#d8dadc" stroke="#888"/><path d="M12 11h2v3h-2z" fill="#2fae1d"/></svg>存储</li>
          <li class="lv2 d-flex align-items-center"><svg class="tw" width="10" height="10"><use href="#tw-c"/></svg><svg width="17" height="16"><circle cx="11" cy="10" r="5" fill="#999" stroke="#555"/><path d="M1 3l4 4V3l4 5 1-7 3 9-4 4H5Q1 10 1 3z" fill="#36b432" stroke="#1c7c22"/><circle cx="12" cy="11" r="1.500" fill="#e8e0c0"/></svg>Windows Server Back</li>
          <li class="lv2 d-flex align-items-center"><svg class="tw" width="10" height="10"></svg><span class="here d-flex align-items-center"><svg width="17" height="16"><path d="M3 1h10l3 3v3H0V4z" fill="#b4b8bc" stroke="#777"/><path d="M12 4h2v2h-2z" fill="#4b4"/><path d="M1 8h14v7H1z" fill="#8c9196"/><path d="M3 8l2 2h6l2-2" fill="#333"/><path d="M2 13h12" stroke="#e0e0e0"/></svg>磁盘管理</span></li>
          <li class="lv1 d-flex align-items-center"><svg class="tw" width="10" height="10"><use href="#tw-c"/></svg><svg width="18" height="16"><path d="M3 0h8v15H3z" fill="#d4dade" stroke="#98a2a8"/><path d="M4 3h6M4 6h6" stroke="#6e7c86"/><circle cx="12" cy="11" r="3.500" fill="none" stroke="#6d9cc8" stroke-width="2.500" stroke-dasharray="2 1"/></svg>服务和应用程序</li>
        </ul>
        <div class="cbar d-flex">
          <div class="step d-flex"><svg class="m-auto" width="12" height="12"><use href="#lt"/></svg></div>
          <div class="thumb d-flex" style="width:75%"><svg class="m-auto" width="8" height="8"><path d="M1 0v8M4 0v8M7 0v8" stroke="#666" stroke-width="1.500"/></svg></div>
          <div class="step d-flex ms-auto border-start"><svg class="m-auto" width="12" height="12"><use href="#rt"/></svg></div>
        </div>
      </div>
      <div class="mid d-flex flex-column flex-shrink-0">
        <div class="vols d-flex flex-column flex-shrink-0">
          <table>
            <colgroup><col style="width:123px"><col style="width:36px"><col style="width:36px"><col style="width:60px"><col style="width:249px"><col style="width:64px"><col></colgroup>
            <thead><tr><th class="clip">卷</th><th class="clip">布局</th><th class="clip">类型</th><th class="clip">文件系统</th><th class="clip">状态</th><th class="clip">容量</th><th class="clip">可用</th></tr></thead>
            <tbody>
              <tr><td class="clip"><span class="d-flex align-items-center"><svg width="16" height="16"><use href="#drive"/></svg><span class="volname">(C:)</span></span></td><td class="clip">简单</td><td class="clip">基本</td><td class="clip">NTFS</td><td class="clip">状态良好 (启动, 页面文件, 故障转储, 主分区)</td><td class="clip">99.66 GB</td><td class="clip">83.1</td></tr>
              <tr><td class="clip"><span class="d-flex align-items-center"><svg width="17" height="16"><use href="#drive" width="16" height="16"/></svg>System Reserved</span></td><td class="clip">简单</td><td class="clip">基本</td><td class="clip">NTFS</td><td class="clip">状态良好 (系统, 活动, 主分区)</td><td class="clip">350 MB</td><td class="clip">82 M</td></tr>
            </tbody>
          </table>
          <div class="cbar d-flex mt-auto">
            <div class="step d-flex"><svg class="m-auto" width="12" height="12"><use href="#lt"/></svg></div>
            <div class="thumb" style="width:70%"></div>
            <div class="step d-flex ms-auto border-start"><svg class="m-auto" width="12" height="12"><use href="#rt"/></svg></div>
          </div>
        </div>
        <div class="splitter flex-shrink-0"></div>
        <div class="disk disk-a d-flex">
          <div class="tag"><svg class="mt-1 mb-1" width="16" height="16"><use href="#drive"/></svg>基本<br>100.00 GB<br>联机</div>
          <div class="part flex-fill d-flex flex-column"><div class="cap"></div><div class="fillarea flex-fill"></div></div>
        </div>
        <div class="disk disk-b d-flex">
          <div class="tag"><svg class="mb-1" width="16" height="16"><circle cx="10" cy="5" r="4.500" fill="#d5d8dc" stroke="#888"/><path d="M8 3q2-2 3 0z" fill="#4b4"/><path d="M1 9h14v6H1z" fill="#cfd0d4" stroke="#888"/><path d="M11 11h3v2h-3z" fill="#2fae1d"/></svg>CD-ROM 0<br><br>无媒体</div>
          <div class="flex-fill"></div>
        </div>
        <div class="legend d-flex align-items-center mt-auto flex-shrink-0">
          <span class="key bg-black"></span><span>未分配</span><span class="key" style="background:#000080"></span><span>主分区</span>
        </div>
      </div>
      <div class="acts flex-fill">
        <div class="cap">操作</div>
        <div class="sect d-flex align-items-center justify-content-between">磁盘管理<svg width="10" height="6"><path d="M0 6h10L5 0z"/></svg></div>
        <a href="#" class="more d-flex align-items-center justify-content-between">更多操作<svg width="8" height="10"><path d="M1 0v10l5-5z"/></svg></a>
      </div>
    </div>
    <div class="mmc-status d-flex flex-shrink-0 justify-content-end"><div style="width:133px"></div><div style="width:87px"></div></div>
  </div>
</section>

<!-- 压缩卷对话框 -->
<form class="win dlg d-flex flex-column" onsubmit="return false">
  <div class="bar d-flex align-items-center justify-content-center flex-shrink-0">压缩 C:</div>
  <button type="button" class="close" aria-label="关闭"><svg class="m-auto" width="10" height="9"><use href="#xb"/></svg></button>
  <div class="client flex-fill d-flex flex-column">
    <div class="frow d-flex"><label for="f1">压缩前的总计大小(MB):</label><input id="f1" value="102048" readonly></div>
    <div class="frow d-flex"><label for="f2">可用压缩空间大小(MB):</label><input id="f2" value="79556" readonly></div>
    <div class="frow d-flex"><label for="f3">输入压缩空间量(MB)(E):</label>
      <div class="spin d-flex"><input id="f3" class="pb-0" value="29556"><span class="caret-bar mt-1"></span>
        <div class="steps d-flex flex-column ms-auto"><button type="button" class="flex-fill" aria-label="增加"><svg class="m-auto" width="10" height="10"><use href="#up"/></svg></button><button type="button" class="flex-fill" aria-label="减少"><svg class="m-auto" width="10" height="10"><use href="#down"/></svg></button></div>
      </div></div>
    <div class="frow d-flex"><label for="f4">压缩后的总计大小(MB):</label><input id="f4" value="72492" readonly></div>
    <div class="hint d-flex">
      <svg width="16" height="17"><path d="M8 1q7 0 7 6 0 5-5 6l-1 3-3-3Q1 12 1 7q0-6 7-6z" fill="#fff" stroke="#aab2b8"/><path d="M8 3v2M8 6v5" stroke="#1f4fd0" stroke-width="2"/></svg>
      <div class="text-nowrap">无法将卷压缩到超出任何不可移动的文件所在的点。有关完成该操作时间的详细信息，请<br>参阅应用程序日志中的 "defrag" 事件。</div>
    </div>
    <div class="hint-more">有关详细信息，请参阅磁盘管理帮助中的“收缩基本卷”</div>
    <div class="d-flex justify-content-end mt-auto gap-2"><button class="push def" style="width:104px">压缩(S)</button><button type="button" class="push" style="width:87px">取消(C)</button></div>
  </div>
</form>

<div class="note">我这里是100G<br>我压缩30个G出来</div>
<svg class="arrows" width="240" height="210" viewBox="760 380 240 210" stroke="#ed1c24" fill="#ed1c24" stroke-width="3" pointer-events="none">
  <path d="M766 421L888 390"/><path d="M903 386l-19-5 5 18z" stroke="none"/>
  <path d="M807 450L882 430"/><path d="M898 426l-20-4 6 17z" stroke="none"/>
  <path d="M795 522L875 512"/><path d="M892 510l-19-8 2 18z" stroke="none"/>
  <path d="M986 578L951 480"/><path d="M945 464l-2 20 17-6z" stroke="none"/>
</svg>
</body>
</html>
